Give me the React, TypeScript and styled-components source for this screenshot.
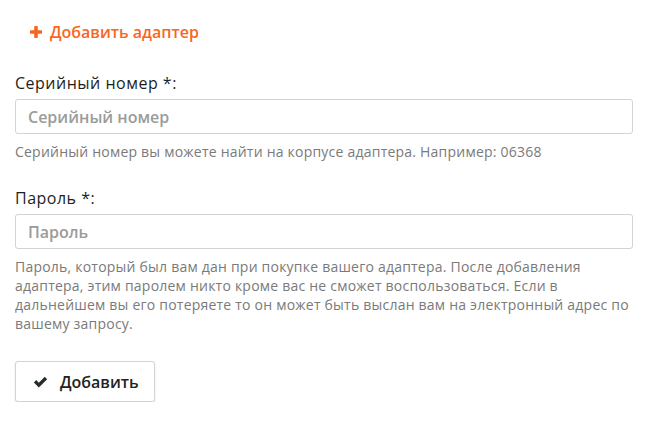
import React from "react";
import styled, { createGlobalStyle } from "styled-components";

const Global = createGlobalStyle`
  html, body { margin: 0; padding: 0; background: #fff; }
  body { font-family: "Open Sans", "Noto Sans", sans-serif; color: #222; }
  * { box-sizing: border-box; }
`;

const Page = styled.div`
  width: 648px;
  padding: 21px 15px 0 15px;
  display: flex;
  flex-direction: column;
  align-items: flex-start;
`;

const AddLink = styled.a`
  display: inline-flex;
  align-items: center;
  gap: 8px;
  padding: 0 15px;
  line-height: 22px;
  color: #f8661f;
  font-size: 16px;
  font-weight: 600;
  text-decoration: none;
  cursor: pointer;
`;

const Form = styled.form`
  display: flex;
  flex-direction: column;
  margin-top: 29px;
  width: 618px;
`;

const Group = styled.div<{ $gap?: number }>`
  display: flex;
  flex-direction: column;
  margin-bottom: ${(p) => p.$gap ?? 0}px;
`;

const Label = styled.label`
  font-size: 16px;
  letter-spacing: 0.5px;
  line-height: 22px;
  color: #1e1e1e;
  margin-bottom: 5px;
`;

const Input = styled.input`
  height: 35px;
  width: 100%;
  border: 1px solid #d3d3d3;
  border-radius: 3px;
  padding: 0 12px;
  font-family: inherit;
  font-size: 16px;
  color: #333;
  outline: none;
  &::placeholder {
    color: #9b9b9b;
    font-weight: 600;
  }
`;

const Help = styled.p`
  margin: 8px 0 0 0;
  font-size: 14px;
  letter-spacing: 0.22px;
  line-height: 19px;
  color: #7a7a7a;
`;

const Button = styled.button`
  align-self: flex-start;
  display: inline-flex;
  align-items: center;
  gap: 12px;
  height: 41px;
  padding: 0 15px 0 17px;
  background: #fff;
  border: 1px solid #d3d3d3;
  border-radius: 3px;
  box-shadow: 0 1px 2px rgba(0, 0, 0, 0.12);
  font-family: inherit;
  font-size: 16px;
  font-weight: 600;
  color: #222;
  cursor: pointer;
`;

const PlusIcon = () => (
  <svg width="12" height="12" viewBox="0 0 12 12" aria-hidden>
    <rect x="4.2" y="0" width="3.6" height="12" rx="0.8" fill="#f8661f" />
    <rect x="0" y="4.2" width="12" height="3.6" rx="0.8" fill="#f8661f" />
  </svg>
);

const CheckIcon = () => (
  <svg width="15" height="12" viewBox="0 0 16 13" aria-hidden>
    <path d="M0.8 7 L3.4 4.4 L6.2 7.2 L12.6 0.8 L15.2 3.4 L6.2 12.4 Z" fill="#262b2f" />
  </svg>
);

export default function App() {
  return (
    <Page>
      <Global />
      <AddLink>
        <PlusIcon />
        Добавить адаптер
      </AddLink>
      <Form onSubmit={(e) => e.preventDefault()}>
        <Group $gap={26}>
          <Label>Серийный номер *:</Label>
          <Input placeholder="Серийный номер" />
          <Help>Серийный номер вы можете найти на корпусе адаптера. Например: 06368</Help>
        </Group>
        <Group $gap={28}>
          <Label>Пароль *:</Label>
          <Input type="password" placeholder="Пароль" />
          <Help>
            Пароль, который был вам дан при покупке вашего адаптера. После добавления адаптера, этим паролем никто
            кроме вас не сможет воспользоваться. Если в дальнейшем вы его потеряете то он может быть выслан вам на
            электронный адрес по вашему запросу.
          </Help>
        </Group>
        <Button type="submit">
          <CheckIcon />
          Добавить
        </Button>
      </Form>
    </Page>
  );
}
